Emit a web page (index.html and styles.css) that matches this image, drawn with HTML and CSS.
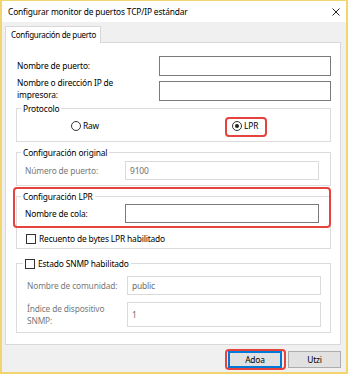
FILE: index.html
```html
<!DOCTYPE html>
<html lang="es">
<head>
  <meta charset="UTF-8">
  <title>Configurar monitor de puertos TCP/IP estándar</title>
  <link rel="stylesheet" href="styles.css">
</head>
<body>
  <div class="window">
    <div class="titlebar">
      <span class="title">Configurar monitor de puertos TCP/IP estándar</span>
      <svg class="close" width="8" height="8" viewBox="0 0 8 8">
        <path d="M0.5 0.5 L7.5 7.5 M7.5 0.5 L0.5 7.5" stroke="#222" stroke-width="1" fill="none"/>
      </svg>
    </div>

    <div class="content">
      <div class="tabs">
        <div class="tab">Configuración de puerto</div>
      </div>

      <div class="panel">
        <div class="row">
          <label>Nombre de puerto:</label>
          <input class="field" type="text">
        </div>
        <div class="row row-tall">
          <label>Nombre o dirección IP de<br>impresora:</label>
          <input class="field" type="text">
        </div>

        <!-- Protocol -->
        <fieldset class="group group-protocol">
          <legend>Protocolo</legend>
          <div class="radios">
            <span class="radio"><i class="circle"></i>Raw</span>
            <span class="radio checked"><i class="circle"></i>LPR</span>
          </div>
        </fieldset>

        <!-- Raw settings (disabled) -->
        <fieldset class="group group-raw">
          <legend>Configuración original</legend>
          <div class="group-row disabled">
            <label>Número de puerto:</label>
            <input class="field" type="text" value="9100" disabled>
          </div>
        </fieldset>

        <!-- LPR settings -->
        <fieldset class="group group-lpr">
          <legend>Configuración LPR</legend>
          <div class="group-row">
            <label>Nombre de cola:</label>
            <input class="field" type="text">
          </div>
          <div class="check-row">
            <i class="box"></i>Recuento de bytes LPR habilitado
          </div>
        </fieldset>

        <!-- SNMP -->
        <fieldset class="group group-snmp">
          <legend><i class="box"></i>Estado SNMP habilitado</legend>
          <div class="group-row disabled">
            <label>Nombre de comunidad:</label>
            <input class="field" type="text" value="public" disabled>
          </div>
          <div class="group-row disabled row-snmp-index">
            <label>Índice de dispositivo<br>SNMP:</label>
            <input class="field" type="text" value="1" disabled>
          </div>
        </fieldset>

        <span class="mark mark-radio"></span>
        <span class="mark mark-lpr"></span>
      </div>

      <div class="buttons">
        <span class="marked">
          <button class="btn btn-default">Adoa</button>
        </span>
        <button class="btn">Utzi</button>
      </div>
    </div>
  </div>
</body>
</html>
```

FILE: styles.css
```css
* {
  box-sizing: border-box;
}
body {
  margin: 0;
  font-family: "Noto Sans", "Open Sans", sans-serif;
  font-size: 8.4px;
  letter-spacing: -0.15px;
  line-height: 12px;
  color: #000;
}
.window {
  width: 348px;
  height: 374px;
  border: 2px solid #f2d56e;
  border-top-width: 1px;
  background-color: #f0f0f0;
}

/* title bar */
.titlebar {
  height: 21px;
  background-color: #fff;
  display: flex;
  align-items: center;
  justify-content: space-between;
  padding: 0 6px 0 6px;
}
.close {
  display: block;
}

/* tab + panel */
.content {
  padding: 4px 5px 0 3px;
}
.tabs {
  display: flex;
}
.tab {
  width: 96px;
  height: 17px;
  margin-bottom: -1px;
  padding: 2px 0 0 5px;
  font-size: 8px;
  letter-spacing: -0.3px;
  white-space: nowrap;
  overflow: hidden;
  background-color: #fff;
  border: 1px solid #d9d9d9;
  border-bottom: none;
  position: relative;
  z-index: 1;
}
.panel {
  position: relative;
  height: 303px;
  background-color: #fff;
  border: 1px solid #d9d9d9;
  padding: 13px 9px 0 10px;
}

.row {
  display: grid;
  grid-template-columns: 143px 172px;
  align-items: center;
  height: 20px;
}
.row label {
  padding-left: 1px;
}
.row-tall {
  margin-top: 5px;
  align-items: start;
}
.row-tall label {
  margin-top: -4px;
}

.field {
  display: block;
  width: 100%;
  height: 100%;
  margin: 0;
  padding: 0 4px;
  font: inherit;
  letter-spacing: inherit;
  color: #000;
  background-color: #fff;
  border: 1px solid #7a7a7a;
  outline: none;
}
.field:disabled {
  color: #6d6d6d;
  border-color: #dadada;
  background-color: #fff;
}

/* group boxes */
.group {
  margin: 0;
  padding: 0;
  border: 1px solid #dcdcdc;
  min-width: 0;
}
.group legend {
  margin-left: 4px;
  padding: 0 2px;
  line-height: 13px;
}
.group-protocol {
  margin-top: 1px;
}
.radios {
  display: grid;
  grid-template-columns: 161px auto;
  align-items: center;
  height: 22px;
  margin-bottom: 4px;
  padding-left: 54px;
}
.radio {
  display: inline-flex;
  align-items: center;
  gap: 2px;
}
.circle {
  width: 10px;
  height: 10px;
  border: 1px solid #333;
  border-radius: 50%;
  background-color: #fff;
  display: flex;
  align-items: center;
  justify-content: center;
}
.checked .circle::after {
  content: "";
  width: 4px;
  height: 4px;
  border-radius: 50%;
  background-color: #222;
}

.group-raw {
  margin-top: 4px;
  padding-bottom: 5px;
}
.group-row {
  display: grid;
  grid-template-columns: 100px 194px;
  align-items: center;
  height: 19px;
  margin-top: 2px;
  padding-left: 8px;
}
.disabled label {
  color: #7a7a7a;
}

.group-lpr {
  margin-top: 4px;
  padding-bottom: 3px;
}
.group-lpr .group-row {
  margin-top: 1px;
}
.check-row {
  display: flex;
  align-items: center;
  gap: 3px;
  height: 13px;
  margin-top: 9px;
  padding-left: 9px;
}
.box {
  display: inline-block;
  width: 10px;
  height: 10px;
  border: 1px solid #333;
  background-color: #fff;
}

.group-snmp {
  margin-top: 8px;
  padding-bottom: 11px;
}
.group-snmp legend {
  margin-left: 6px;
  display: flex;
  align-items: center;
  gap: 3px;
}
.group-snmp .group-row {
  margin-top: 6px;
  padding-left: 10px;
}
.group-snmp .row-snmp-index {
  margin-top: 7px;
}
.row-snmp-index label {
  margin-top: 1px;
}

/* red highlight marks */
.mark {
  position: absolute;
  border: 2px solid #e5433d;
  border-radius: 4px;
  pointer-events: none;
}
.mark-radio {
  left: 219px;
  top: 74px;
  width: 42px;
  height: 20px;
}
.mark-lpr {
  left: 7px;
  top: 144px;
  width: 318px;
  height: 41px;
}

/* buttons */
.buttons {
  display: flex;
  justify-content: flex-end;
  gap: 6px;
  margin-top: 6px;
}
.btn {
  width: 53px;
  height: 17px;
  padding: 0;
  font: inherit;
  letter-spacing: inherit;
  color: #000;
  background-color: #e1e1e1;
  border: 1px solid #adadad;
}
.btn-default {
  width: 54px;
  border-color: #0078d7;
  box-shadow: inset 0 0 0 1px #0078d7;
}
.marked {
  position: relative;
  display: flex;
}
.marked::after {
  content: "";
  position: absolute;
  top: -2px;
  left: -3px;
  right: -4px;
  bottom: -2px;
  border: 2px solid #e5433d;
  border-radius: 4px;
}
```
